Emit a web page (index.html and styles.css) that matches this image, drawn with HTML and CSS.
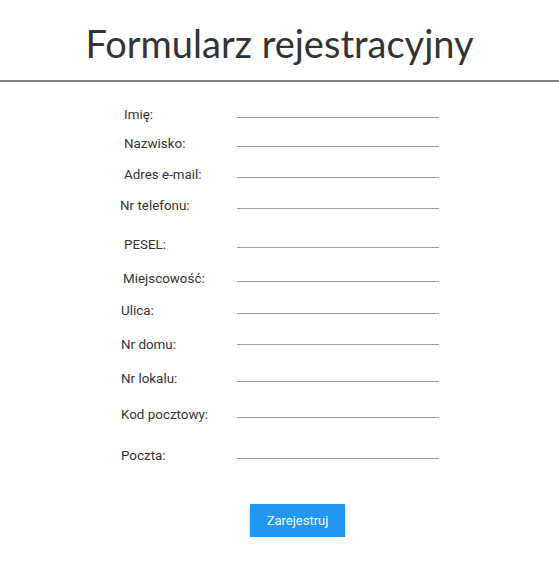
FILE: index.html
```html
<!DOCTYPE html>
<html lang="pl">
<head>
<meta charset="utf-8">
<title>Formularz rejestracyjny</title>
<link rel="stylesheet" href="styles.css">
</head>
<body>
<header class="header">
  <h1 class="title">Formularz rejestracyjny</h1>
</header>
<form class="form">
  <div class="fields">
    <label class="label in4">Imię:</label><input class="input" type="text">
    <label class="label in4">Nazwisko:</label><input class="input" type="text">
    <label class="label in4">Adres e-mail:</label><input class="input" type="email">
    <label class="label">Nr telefonu:</label><input class="input" type="tel">
    <label class="label in4">PESEL:</label><input class="input" type="text">
    <label class="label in3">Miejscowość:</label><input class="input" type="text">
    <label class="label in1">Ulica:</label><input class="input" type="text">
    <label class="label in1 low">Nr domu:</label><input class="input" type="text">
    <label class="label in1">Nr lokalu:</label><input class="input" type="text">
    <label class="label in1">Kod pocztowy:</label><input class="input" type="text">
    <label class="label in1">Poczta:</label><input class="input" type="text">
  </div>
  <div class="actions">
    <button class="button" type="submit">Zarejestruj</button>
  </div>
</form>
</body>
</html>
```
FILE: styles.css
```css
html, body {
  margin: 0;
  padding: 0;
  background: #fff;
}
body {
  font-family: Roboto, "Liberation Sans", sans-serif;
  color: #333;
}
.header {
  border-bottom: 2px solid #808080;
  box-sizing: border-box;
  height: 82px;
}
.title {
  margin: 0;
  padding-top: 18px;
  text-align: center;
  font-family: Lato, "Open Sans", sans-serif;
  font-weight: 400;
  font-size: 38px;
  line-height: 50px;
  color: #333;
}
.form {
  display: flex;
  flex-direction: column;
  align-items: center;
}
.fields {
  display: grid;
  grid-template-columns: 117px 202px;
  grid-template-rows: 36px 29px 31px 31px 39px 34px 32px 31px 37px 36px 41px;
  padding-left: 2px;
  transform: translateX(-1px);
}
.label {
  align-self: end;
  font-size: 13.4px;
  line-height: 16px;
  margin-bottom: -5px;
  color: #333;
  white-space: nowrap;
}
.in1 { padding-left: 1px; }
.in3 { padding-left: 3px; }
.in4 { padding-left: 4px; }
.low { margin-bottom: -8px; }
.input {
  align-self: end;
  border: none;
  border-bottom: 1px solid #9e9e9e;
  outline: none;
  padding: 0;
  height: 20px;
  width: 202px;
  font: inherit;
  background: transparent;
  box-sizing: border-box;
}
.actions {
  display: flex;
  justify-content: center;
  padding-top: 45px;
  padding-left: 36px;
}
.button {
  width: 95px;
  height: 33px;
  border: none;
  background: #2196f3;
  color: #fff;
  font-family: Roboto, "Liberation Sans", sans-serif;
  font-size: 13px;
  box-shadow: 0 1px 3px rgba(0, 0, 0, 0.25);
  cursor: pointer;
}
```
